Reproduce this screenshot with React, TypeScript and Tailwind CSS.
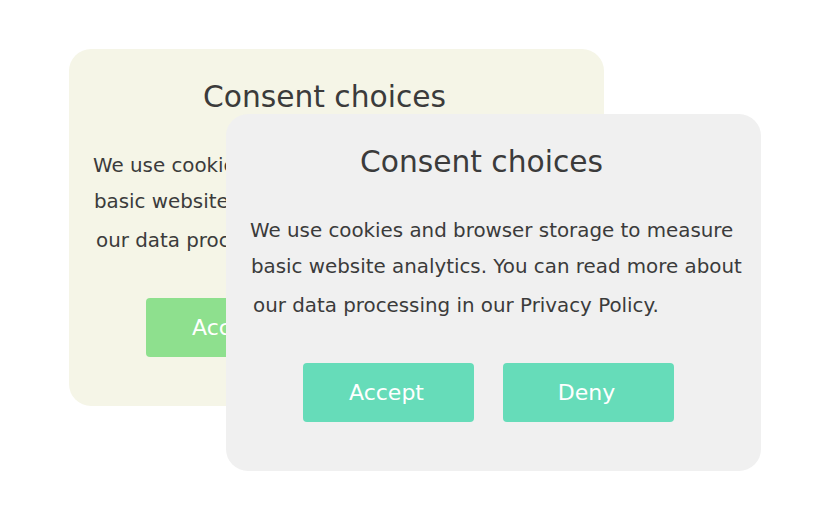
const font = { fontFamily: '"DejaVu Sans", sans-serif' };

function ConsentCard({ bg, btn }: { bg: string; btn: string }) {
  return (
    <div className={`w-[535px] h-[357px] rounded-[22px] ${bg} text-[#3b3b3b]`}>
      <h2 className="pt-[31px] pl-[134px] text-[29.7px] leading-[34px]">Consent choices</h2>
      <div className="mt-[40px] text-[19.85px]">
        <p className="ml-[24px] leading-[24px]">We use cookies and browser storage to measure</p>
        <p className="ml-[25px] mt-[12px] leading-[24px]">basic website analytics. You can read more about</p>
        <p className="ml-[27px] mt-[15px] leading-[24px]">our data processing in our Privacy Policy.</p>
      </div>
      <div className="mt-[45px] pl-[77px] flex gap-[29px]">
        <button className={`w-[171px] h-[59px] rounded-[4px] ${btn} pr-[4px] text-white text-[22px]`}>Accept</button>
        <button className={`w-[171px] h-[59px] rounded-[4px] ${btn} pr-[4px] text-white text-[22px]`}>Deny</button>
      </div>
    </div>
  );
}

export default function App() {
  return (
    <div className="relative w-[833px] h-[525px] bg-white overflow-hidden" style={font}>
      <div className="absolute left-[69px] top-[49px]">
        <ConsentCard bg="bg-[#f5f5e7]" btn="bg-[#8ee08e]" />
      </div>
      <div className="absolute left-[226px] top-[114px]">
        <ConsentCard bg="bg-[#f0f0f0]" btn="bg-[#66dcb9]" />
      </div>
    </div>
  );
}
